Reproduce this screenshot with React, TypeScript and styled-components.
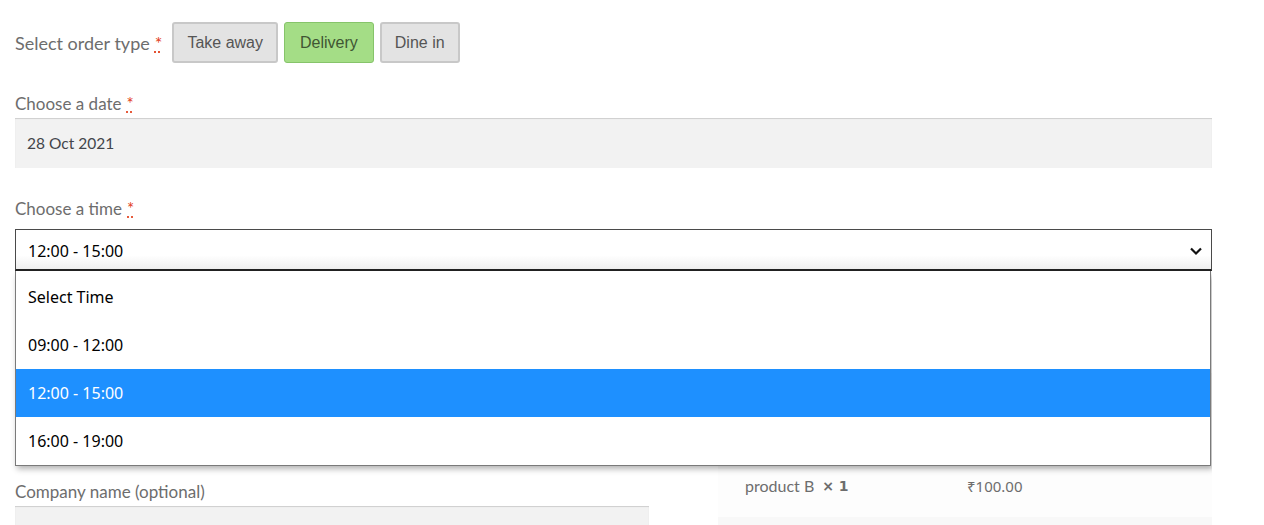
import styled, { createGlobalStyle } from 'styled-components';

const GlobalStyle = createGlobalStyle`
  body {
    margin: 0;
    background: #ffffff;
    font-family: Lato, "Noto Sans", sans-serif;
    color: #6d6d6d;
  }
`;

const Page = styled.div`
  width: 1197px;
  padding: 22px 0 0 15px;
  height: 503px;
  overflow: hidden;
`;

// order type row
const TypeRow = styled.div`
  display: flex;
  align-items: center;
  gap: 6px;
  height: 41px;
  margin-bottom: 27px;
`;

const TypeLabel = styled.span`
  font-size: 18px;
  margin-right: 4px;
`;

const Required = styled.abbr`
  color: #e2401c;
  text-decoration: underline dotted;
  text-underline-offset: 2px;
  margin-left: 5px;
  cursor: help;
`;

const TypeButton = styled.button<{ $active?: boolean }>`
  height: 41px;
  padding: 0 ${(p) => (p.$active ? 15 : 13)}px;
  font-family: "Liberation Sans", Arial, sans-serif;
  font-size: 16px;
  border-radius: 3px;
  color: ${(p) => (p.$active ? '#3f5633' : '#555555')};
  background: ${(p) => (p.$active ? '#a4dd86' : '#e3e3e3')};
  border: ${(p) => (p.$active ? '1px solid #86c46a' : '2px solid #c8c8c8')};
  box-sizing: border-box;
`;

const Field = styled.div`
  margin-bottom: 27px;
`;

const Label = styled.label<{ $gap?: number }>`
  display: block;
  font-size: 17px;
  line-height: 28px;
  margin-bottom: ${(p) => p.$gap ?? 0}px;
`;

const TextBox = styled.div<{ $width?: string }>`
  box-sizing: border-box;
  height: 50px;
  width: ${(p) => p.$width ?? '100%'};
  padding: 0 12px;
  display: flex;
  align-items: center;
  background: #f2f2f2;
  box-shadow: inset 0 1px 1px rgba(0, 0, 0, 0.15);
  font-size: 15.5px;
  color: #43454b;
`;

// select + open list
const SelectWrap = styled.div`
  position: relative;
`;

const SelectBox = styled.div`
  box-sizing: border-box;
  height: 42px;
  border: 1px solid #4a4a4a;
  border-bottom: 2px solid #222;
  padding: 3px 8px 0 12px;
  display: flex;
  align-items: center;
  justify-content: space-between;
  background: linear-gradient(#ffffff 65%, #eeeeee);
  font-family: "Noto Sans", "DejaVu Sans", sans-serif;
  font-size: 16px;
  color: #000;
`;

const OptionList = styled.ul`
  position: absolute;
  top: 44px;
  left: 0;
  right: 1px;
  margin: 0;
  padding: 0;
  list-style: none;
  background: #fff;
  border: 1px solid #7a7a7a;
  border-top: none;
  box-shadow: 2px 3px 6px rgba(0, 0, 0, 0.3);
  z-index: 10;
  &::before {
    content: '';
    position: absolute;
    top: -2px;
    left: -1px;
    right: -1px;
    height: 2px;
    background: #fff;
    border-left: 1px solid #7a7a7a;
    border-right: 1px solid #7a7a7a;
  }
`;

const Option = styled.li<{ $selected?: boolean }>`
  height: 48px;
  display: flex;
  align-items: center;
  padding-left: 12px;
  font-family: "Noto Sans", "DejaVu Sans", sans-serif;
  font-size: 16px;
  background: ${(p) => (p.$selected ? '#1e90ff' : '#fff')};
  color: ${(p) => (p.$selected ? '#fff' : '#000')};
`;

// lower two column section
const Columns = styled.div`
  display: grid;
  grid-template-columns: 634px 494px;
  column-gap: 69px;
`;

const Heading = styled.h3`
  margin: 0 0 27px;
  font-size: 24px;
  line-height: 48px;
  font-weight: 300;
  color: #333;
`;

const NameRow = styled.div`
  display: grid;
  grid-template-columns: 1fr 1fr;
  gap: 20px;
`;

const OrderTable = styled.div`
  display: grid;
  grid-template-columns: 222px 1fr;
  margin-top: 1px;
`;

const Cell = styled.div<{ $shade?: string; $head?: boolean }>`
  box-sizing: border-box;
  height: 48px;
  display: flex;
  align-items: flex-start;
  padding: 7px 0 0 27px;
  line-height: 20px;
  font-size: 16px;
  font-weight: ${(p) => (p.$head ? 700 : 400)};
  background: ${(p) => p.$shade ?? '#fdfdfd'};
  color: #6d6d6d;
`;

const Qty = styled.strong`
  margin-left: 8px;
  font-size: 14px;
  font-family: "DejaVu Sans", sans-serif;
  color: #6d6d6d;
`;

const Price = styled.span`
  font-family: "Noto Sans", sans-serif;
  font-size: 15px;
`;

const ChevronDown = () => (
  <svg width="14" height="10" viewBox="0 0 14 10">
    <polyline points="2,2.5 7,7.5 12,2.5" fill="none" stroke="#111" strokeWidth="2.2" />
  </svg>
);

const times = ['Select Time', '09:00 - 12:00', '12:00 - 15:00', '16:00 - 19:00'];

const App = () => {
  return (
    <>
      <GlobalStyle />
      <Page>
        <TypeRow>
          <TypeLabel>
            Select order type<Required title="required">*</Required>
          </TypeLabel>
          <TypeButton>Take away</TypeButton>
          <TypeButton $active>Delivery</TypeButton>
          <TypeButton>Dine in</TypeButton>
        </TypeRow>

        <Field>
          <Label>
            Choose a date<Required title="required">*</Required>
          </Label>
          <TextBox>28 Oct 2021</TextBox>
        </Field>

        <Field>
          <Label $gap={6}>
            Choose a time<Required title="required">*</Required>
          </Label>
          <SelectWrap>
            <SelectBox>
              <span>12:00 - 15:00</span>
              <ChevronDown />
            </SelectBox>
            <OptionList>
              {times.map((t) => (
                <Option key={t} $selected={t === '12:00 - 15:00'}>
                  {t}
                </Option>
              ))}
            </OptionList>
          </SelectWrap>
        </Field>

        <Columns>
          <div>
            <Heading>Billing details</Heading>
            <NameRow>
              <Field>
                <Label>First name</Label>
                <TextBox />
              </Field>
              <Field>
                <Label>Last name</Label>
                <TextBox />
              </Field>
            </NameRow>
            <Field>
              <Label>Company name (optional)</Label>
              <TextBox />
            </Field>
          </div>
          <div>
            <Heading>Your order</Heading>
            <OrderTable>
              <Cell $head $shade="#f8f8f8">Product</Cell>
              <Cell $head $shade="#f8f8f8">Subtotal</Cell>
              <Cell $shade="#f8f8f8">
                product A<Qty>× 1</Qty>
              </Cell>
              <Cell $shade="#f8f8f8">
                <Price>₹100.00</Price>
              </Cell>
              <Cell>
                product B<Qty>× 1</Qty>
              </Cell>
              <Cell>
                <Price>₹100.00</Price>
              </Cell>
              <Cell $shade="#f8f8f8" />
              <Cell $shade="#f8f8f8" />
            </OrderTable>
          </div>
        </Columns>
      </Page>
    </>
  );
};

export default App;
